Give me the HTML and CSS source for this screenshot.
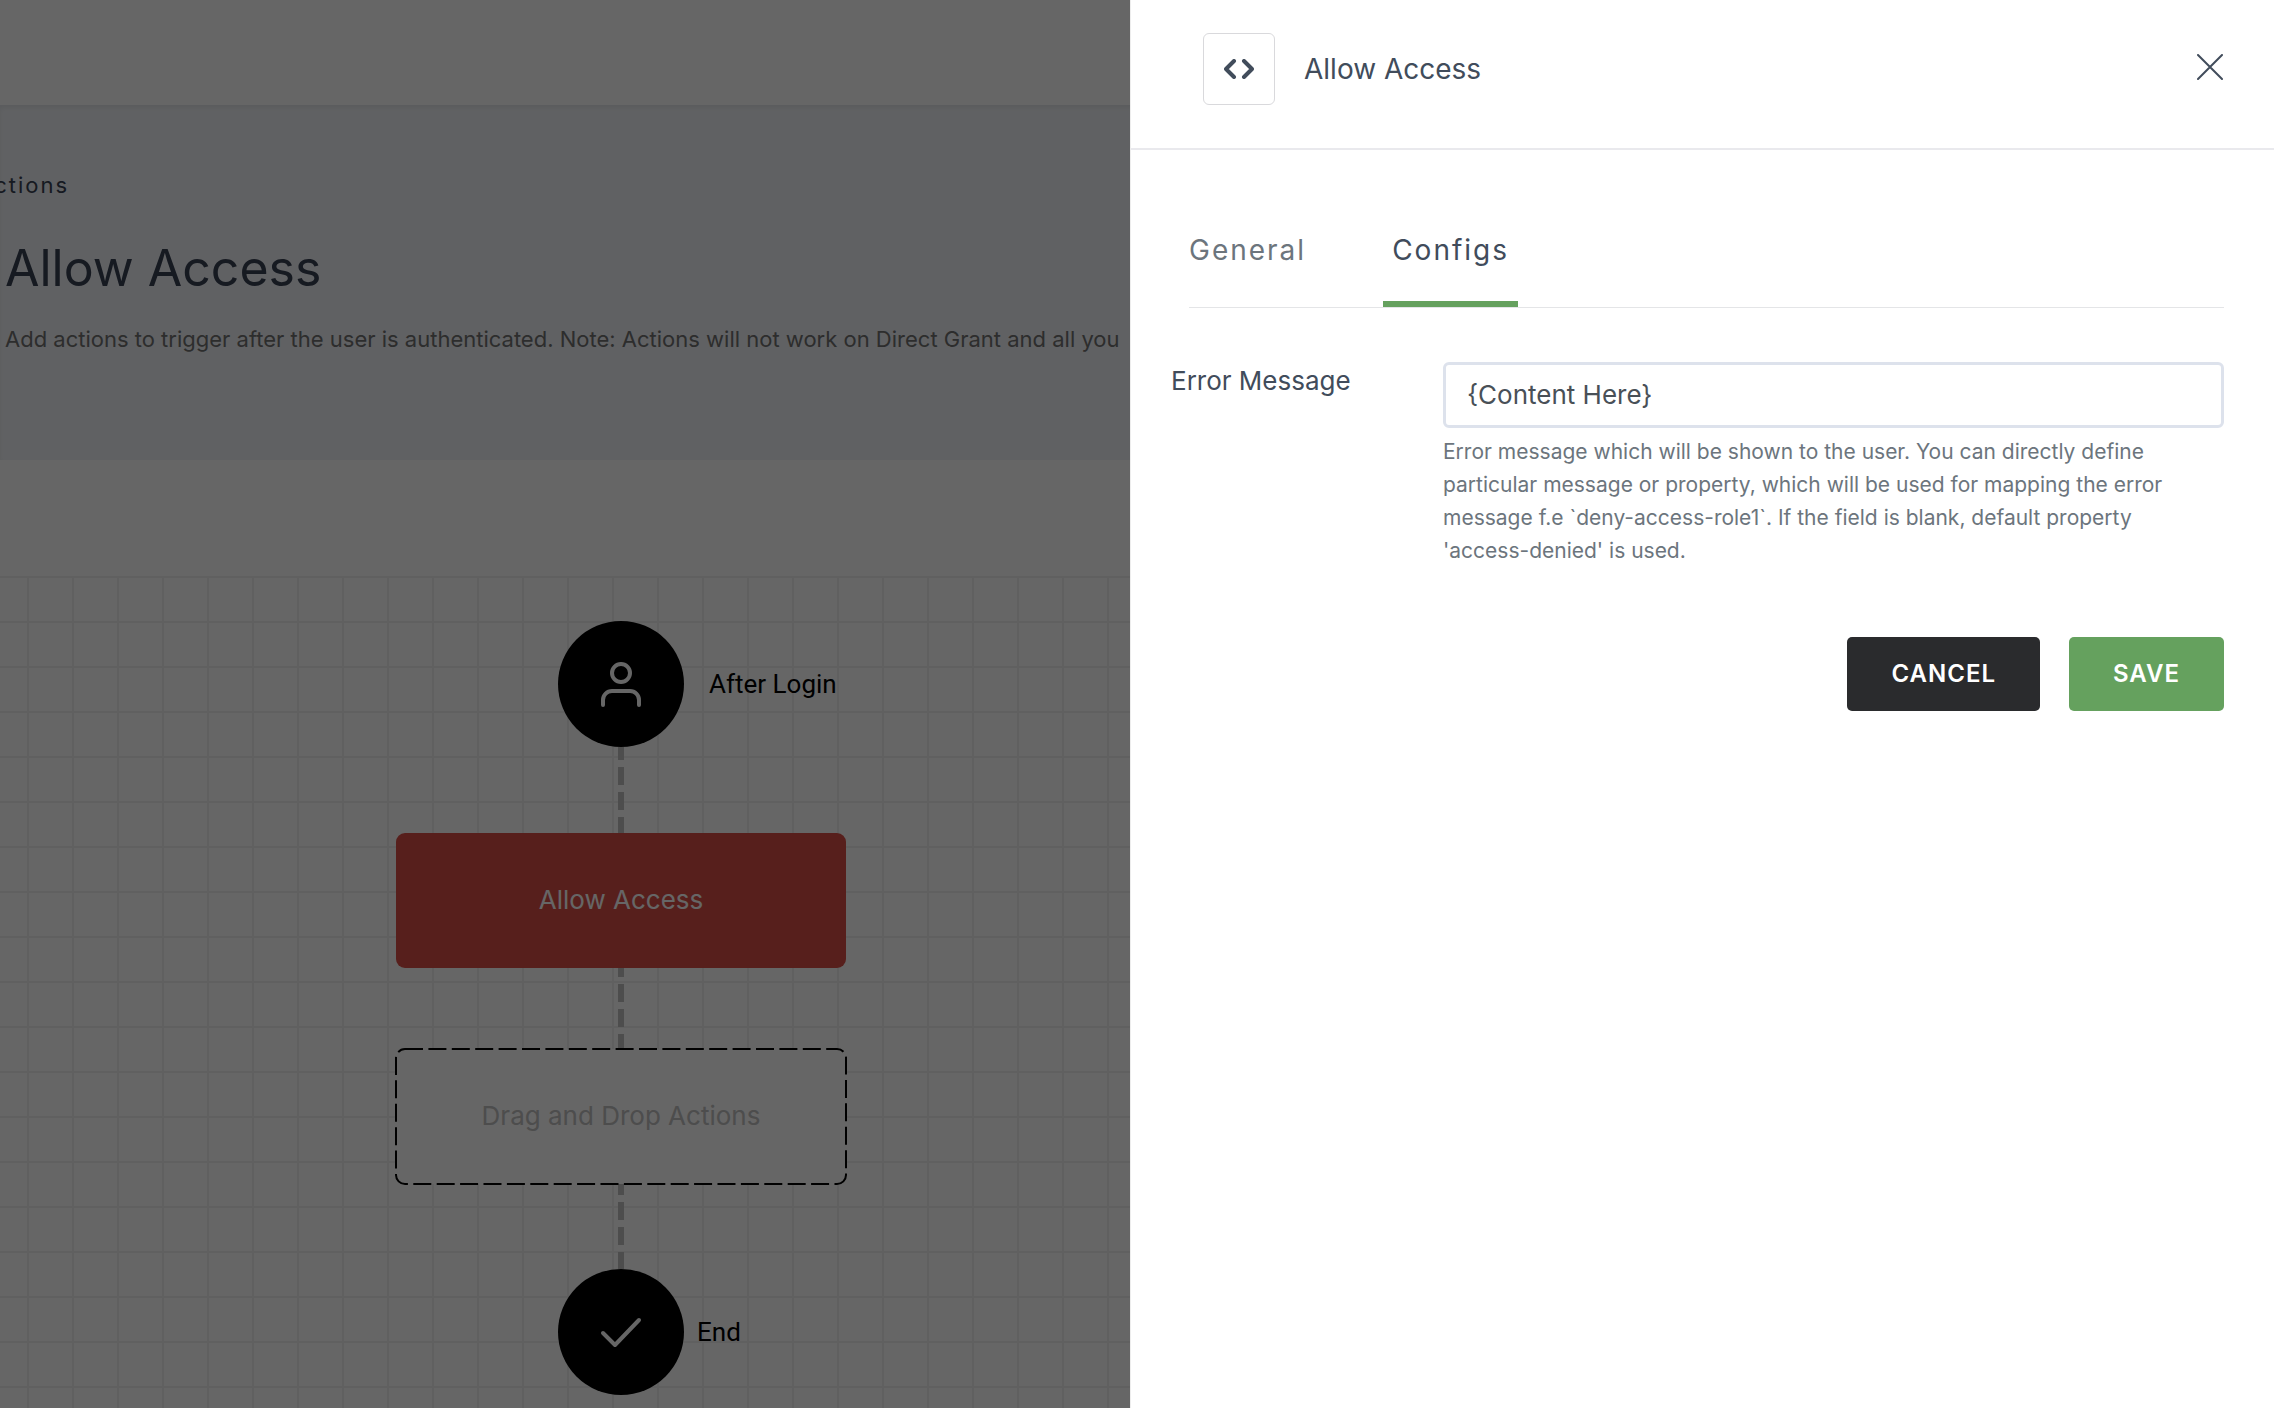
FILE: index.html
```html
<!DOCTYPE html>
<html lang="en">
<head>
<meta charset="utf-8">
<meta name="viewport" content="width=device-width, initial-scale=1">
<title>Allow Access</title>
<link rel="stylesheet" href="styles.css">
</head>
<body>
<div class="page">
  <header class="topbar"></header>
  <section class="hero">
    <nav class="breadcrumb" aria-label="Breadcrumb"><a href="#">Actions</a></nav>
    <h1 class="hero-title">Allow Access</h1>
    <p class="hero-text">Add actions to trigger after the user is authenticated. Note: Actions will not work on Direct Grant and all you</p>
  </section>
  <main class="canvas">
    <div class="flow">
      <div class="node">
        <span class="node-dot">
          <svg width="42" height="46" viewBox="0 0 42 46" fill="none" stroke="#fff" stroke-width="4" stroke-linecap="round" aria-hidden="true"><circle cx="21" cy="12" r="9"/><path d="M3 44v-5a9 9 0 0 1 9-9h18a9 9 0 0 1 9 9v5"/></svg>
        </span>
        <span class="node-label">After Login</span>
      </div>
      <svg class="link" width="6" height="86" aria-hidden="true"><path d="M3 0v86" stroke-dashoffset="5"/></svg>
      <div class="action">Allow Access</div>
      <svg class="link" width="6" height="81" aria-hidden="true"><path d="M3 0v81" stroke-dashoffset="9"/></svg>
      <div class="drop">
        <svg class="drop-frame" width="452" height="137" viewBox="-1 -1 452 137" aria-hidden="true"><rect width="450" height="135" rx="9"/></svg>
        <span class="drop-text">Drag and Drop Actions</span>
      </div>
      <svg class="link" width="6" height="85" aria-hidden="true"><path d="M3 0v85" stroke-dashoffset="7"/></svg>
      <div class="node">
        <span class="node-dot">
          <svg width="42" height="32" viewBox="0 0 42 32" fill="none" stroke="#fff" stroke-width="4" stroke-linecap="round" stroke-linejoin="round" aria-hidden="true"><path d="M3 17l12 12L39 4"/></svg>
        </span>
        <span class="node-label node-label-end">End</span>
      </div>
    </div>
  </main>
</div>
<div class="backdrop"></div>
<aside class="drawer" role="dialog" aria-labelledby="drawer-title">
  <header class="drawer-head">
    <span class="drawer-icon">
      <svg width="30" height="20" viewBox="0 0 30 20" fill="none" stroke="#414c5b" stroke-width="4" stroke-linecap="round" stroke-linejoin="round" aria-hidden="true"><path d="M10 2L2 10l8 8M20 2l8 8-8 8"/></svg>
    </span>
    <h2 class="drawer-title" id="drawer-title">Allow Access</h2>
    <button class="close" type="button" aria-label="Close">
      <svg width="26" height="26" viewBox="0 0 26 26" stroke="#414c5b" stroke-width="2" stroke-linecap="round" aria-hidden="true"><path d="M1 1l24 24M25 1L1 25"/></svg>
    </button>
  </header>
  <div class="tabs" role="tablist">
    <button class="tab" type="button" role="tab" aria-selected="false">General</button>
    <button class="tab tab-active" type="button" role="tab" aria-selected="true">Configs</button>
  </div>
  <form class="form">
    <div class="field">
      <label class="field-label" for="error-message">Error Message</label>
      <div class="field-body">
        <input class="field-input" id="error-message" type="text" value="{Content Here}" aria-describedby="error-help">
        <p class="field-help" id="error-help">Error message which will be shown to the user. You can directly define particular message or property, which will be used for mapping the error message f.e `deny-access-role1`. If the field is blank, default property 'access-denied' is used.</p>
      </div>
    </div>
    <div class="buttons">
      <button class="button button-dark" type="button">CANCEL</button>
      <button class="button button-green" type="submit">SAVE</button>
    </div>
  </form>
</aside>
</body>
</html>
```

FILE: styles.css
```css
* {
  box-sizing: border-box;
}

body {
  margin: 0;
  font-family: Inter, "Liberation Sans", sans-serif;
  color: #414c5b;
  background: #fff;
}

h1, h2, p {
  margin: 0;
  font-weight: 400;
}

button, input {
  font-family: inherit;
  color: inherit;
}

/* Page behind the drawer */
.page {
  display: flex;
  flex-direction: column;
  height: 100vh;
  overflow: hidden;
}

.topbar {
  flex: none;
  height: 105px;
}

.hero {
  flex: none;
  height: 355px;
  padding: 64px 5px 0;
  background: #f0f3f7;
  box-shadow: inset 0 3px 4px rgba(0, 0, 0, 0.06);
  white-space: nowrap;
}

.breadcrumb {
  margin-left: -28px;
  font-size: 22px;
  line-height: 32px;
  letter-spacing: 2px;
}

.breadcrumb a {
  color: #394154;
  text-decoration: none;
}

.hero-title {
  margin-top: 35px;
  font-size: 50px;
  line-height: 64px;
  color: #394154;
}

.hero-text {
  margin-top: 23px;
  font-size: 22px;
  line-height: 32px;
  color: #717171;
}

.canvas {
  flex: 1;
  min-height: 0;
  margin-top: 116px;
  padding: 45px 0 0 396px;
  background-image:
    linear-gradient(#f0f0f0 2px, transparent 2px),
    linear-gradient(90deg, #f0f0f0 2px, transparent 2px);
  background-size: 45px 45px;
  background-position: 27px 0;
}

.flow {
  display: flex;
  flex-direction: column;
  align-items: center;
  width: 450px;
}

.node {
  display: grid;
  grid-template-columns: 1fr 126px 1fr;
  align-items: center;
  width: 100%;
}

.node-dot {
  grid-column: 2;
  display: flex;
  align-items: center;
  justify-content: center;
  height: 126px;
  border-radius: 50%;
  background: #000;
}

.node-label {
  padding-left: 25px;
  font-family: Roboto, "Liberation Sans", sans-serif;
  font-size: 26px;
  line-height: 32px;
  color: #000;
  white-space: nowrap;
}

.node-label-end {
  padding-left: 13px;
}

.link {
  display: block;
  stroke: #c0c0c0;
  stroke-width: 6px;
  stroke-dasharray: 18 7;
}

.action, .drop {
  display: flex;
  align-items: center;
  justify-content: center;
  width: 100%;
  height: 135px;
  padding-bottom: 2px;
  border-radius: 9px;
  font-size: 26px;
  line-height: 32px;
}

.action {
  background: #d94e46;
  color: #fff;
}

.drop {
  position: relative;
  background: #fff;
  color: #c0c0c0;
}

.drop-frame {
  position: absolute;
  top: -1px;
  left: -1px;
  fill: none;
  stroke: #000;
  stroke-width: 2px;
  stroke-dasharray: 18 5.4;
}

.backdrop {
  position: fixed;
  inset: 0;
  background: rgba(0, 0, 0, 0.6);
}

/* Drawer */
.drawer {
  position: fixed;
  top: 0;
  right: 0;
  bottom: 0;
  width: calc(50% + 7px);
  border-left: 1px solid #ededed;
  background: #fff;
  overflow: auto;
}

.drawer-head {
  display: flex;
  align-items: center;
  padding: 33px 51px 43px 72px;
  border-bottom: 2px solid #e9e9ed;
}

.drawer-icon {
  display: flex;
  align-items: center;
  justify-content: center;
  width: 72px;
  height: 72px;
  border: 1px solid #d9d9dc;
  border-radius: 6px;
}

.drawer-title {
  flex: 1;
  padding-left: 29px;
  font-size: 28px;
  line-height: 36px;
}

.close {
  display: flex;
  padding: 0 0 4px;
  border: 0;
  background: none;
}

.tabs {
  display: flex;
  gap: 77px;
  margin: 70px 50px 0 58px;
  border-bottom: 1px solid #e4e5e7;
}

.tab {
  padding: 12px 0 33px;
  border: 0;
  border-bottom: 6px solid transparent;
  background: none;
  font-size: 28px;
  line-height: 36px;
  letter-spacing: 2px;
  color: #6c757d;
}

.tab-active {
  padding-left: 9px;
  padding-right: 9px;
  border-bottom-color: #65a15e;
  color: #414c5b;
}

.form {
  padding: 54px 50px 0 40px;
}

.field {
  display: grid;
  grid-template-columns: 272px 1fr;
}

.field-label {
  padding-top: 3px;
  font-size: 26px;
  line-height: 32px;
}

.field-input {
  display: block;
  width: 100%;
  height: 66px;
  padding: 0 21px 2px;
  border: 3px solid #dde2ec;
  border-radius: 6px;
  background: #fff;
  font-size: 26px;
  line-height: 32px;
  color: #495057;
}

.field-help {
  margin-top: 7px;
  padding-right: 24px;
  font-size: 21px;
  line-height: 33px;
  color: #6c757d;
}

.buttons {
  display: flex;
  justify-content: flex-end;
  gap: 29px;
  margin-top: 70px;
}

.button {
  height: 74px;
  padding: 0 44px;
  border: 0;
  border-radius: 5px;
  font-size: 24px;
  font-weight: 600;
  line-height: 32px;
  letter-spacing: 1px;
  color: #fff;
}

.button-dark {
  background: #2a2b2d;
}

.button-green {
  background: #65a15e;
}
```
